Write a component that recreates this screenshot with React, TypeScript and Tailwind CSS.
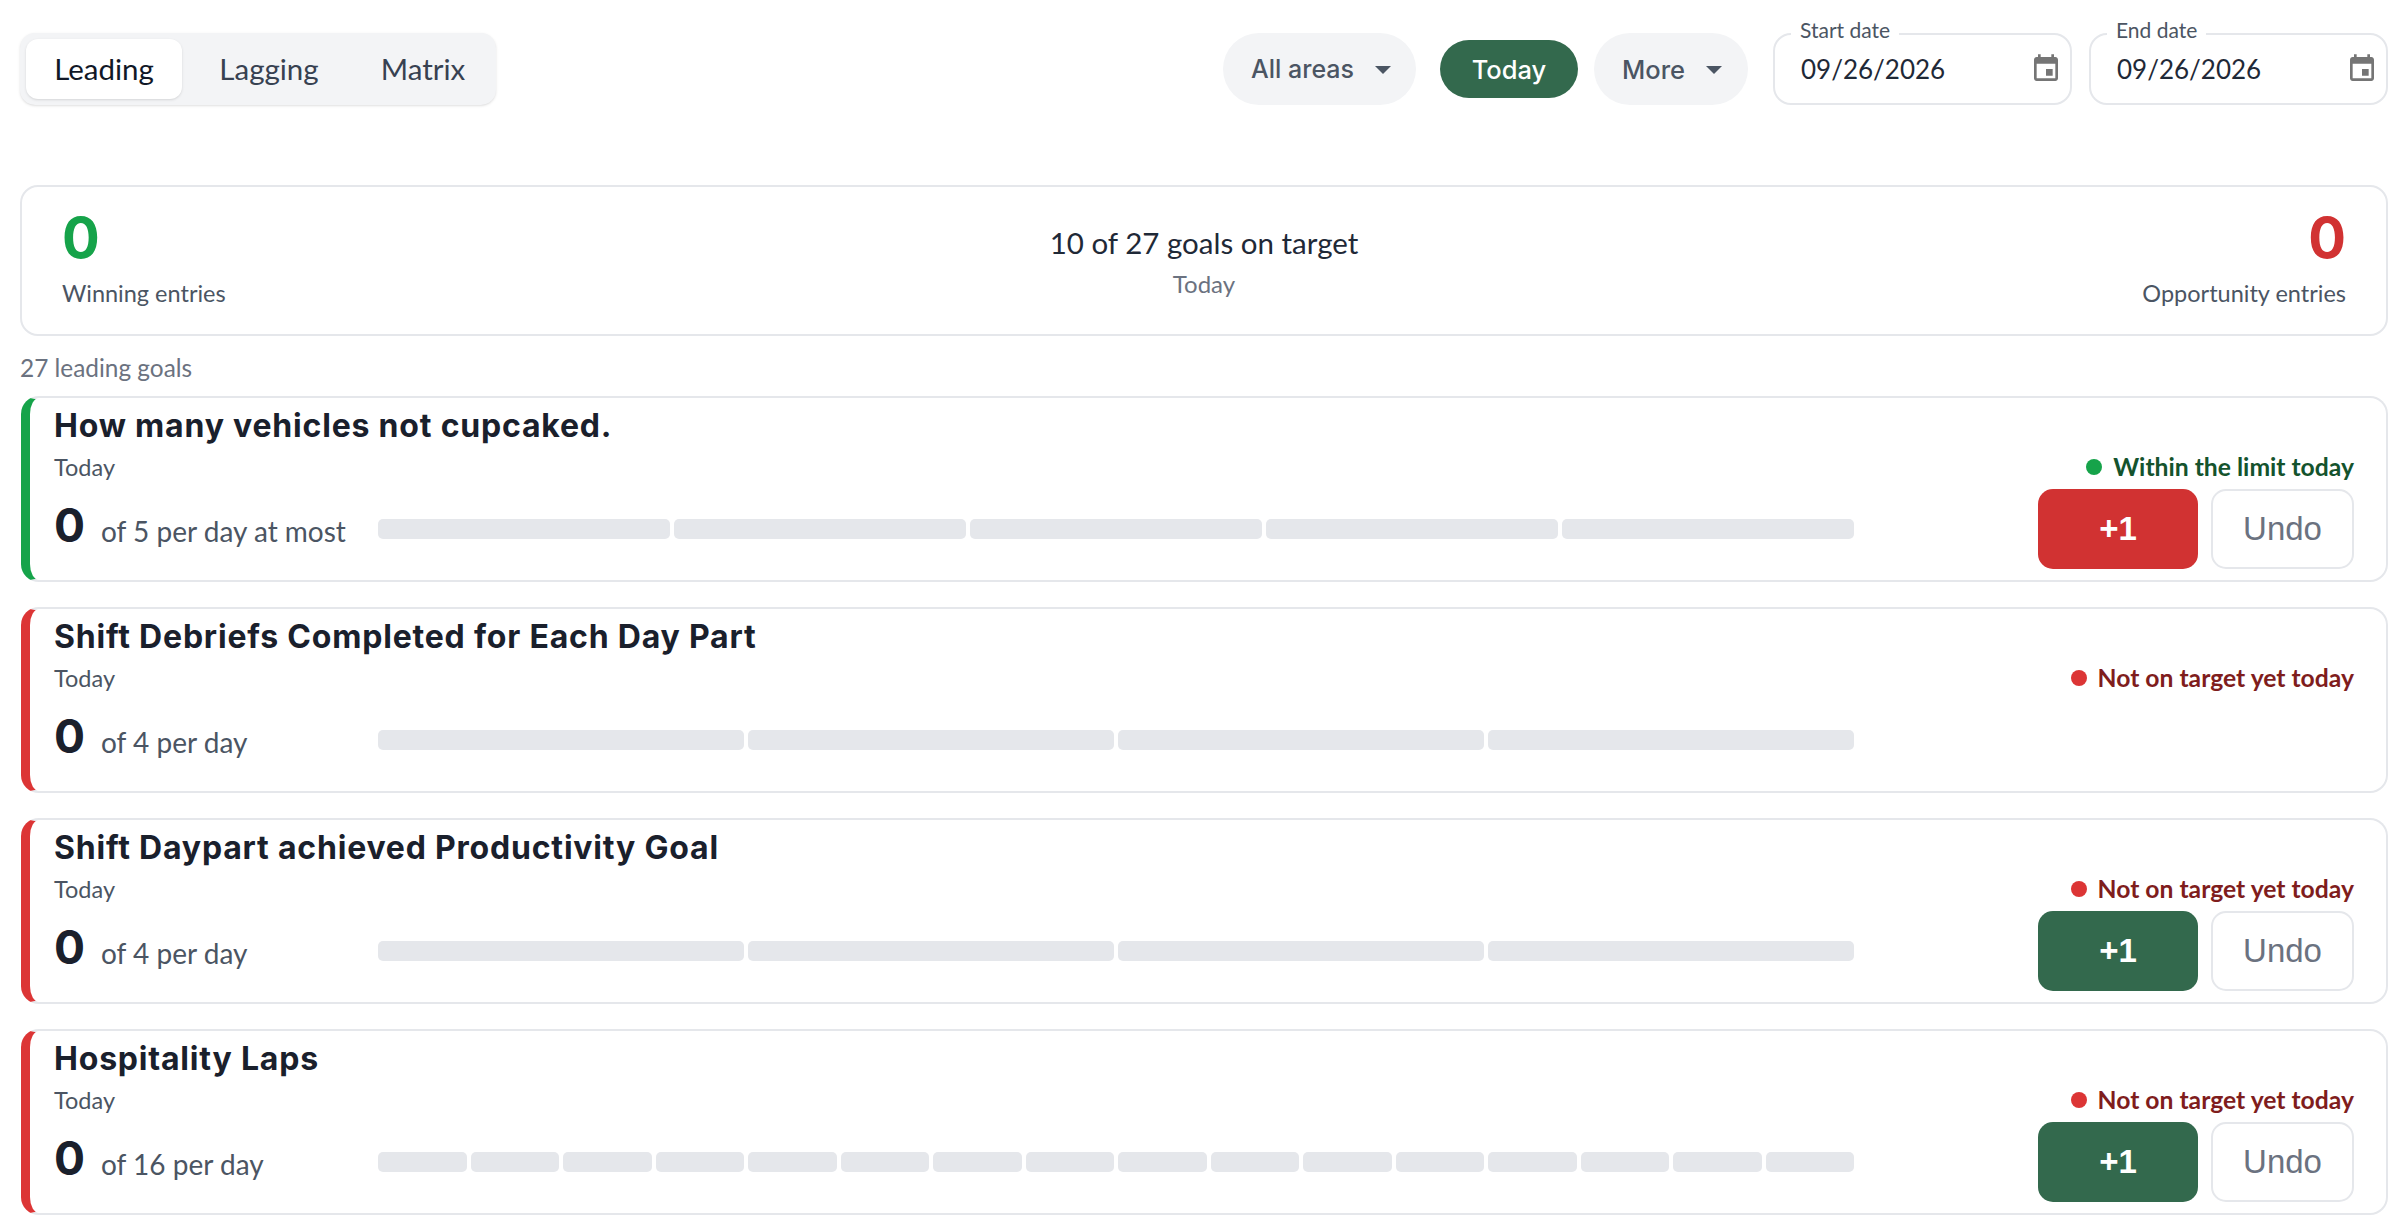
const bodyFont = "font-['Lato','Inter',sans-serif]"
const strongFont = "font-['Inter',sans-serif]"

const goals = [
  { title: "How many vehicles not cupcaked.", target: "of 5 per day at most", segments: 5, winning: true, actions: "red" },
  { title: "Shift Debriefs Completed for Each Day Part", target: "of 4 per day", segments: 4, winning: false, actions: "none" },
  { title: "Shift Daypart achieved Productivity Goal", target: "of 4 per day", segments: 4, winning: false, actions: "green" },
  { title: "Hospitality Laps", target: "of 16 per day", segments: 16, winning: false, actions: "green" },
]

const CalendarIcon = () => (
  <svg viewBox="0 0 24 24" className="h-[32px] w-[32px] fill-[#757575]">
    <path d="M17 12h-5v5h5v-5zM16 1v2H8V1H6v2H5c-1.11 0-1.99.9-1.99 2L3 19c0 1.1.89 2 2 2h14c1.1 0 2-.9 2-2V5c0-1.1-.9-2-2-2h-1V1h-2zm3 18H5V8h14v11z" />
  </svg>
)

const Caret = () => <span className="ml-[21px] h-0 w-0 border-x-[8px] border-t-[8px] border-x-transparent border-t-[#4b5563]" />

const DateField = ({ label }: { label: string }) => (
  <div className="relative flex h-[72px] w-[299px] items-center justify-between rounded-[18px] border-2 border-[#e5e7eb] pl-[26px] pr-[8px]">
    <span className="absolute left-[16px] top-[-18px] bg-white px-[9px] text-[21px] leading-[26px] text-[#4b5563]">{label}</span>
    <span className="text-[26px] text-[#1f2937]">09/26/2026</span>
    <CalendarIcon />
  </div>
)

const GoalCard = ({ goal }: { goal: (typeof goals)[number] }) => (
  <div className={`ml-[1px] flex h-[186px] rounded-[18px] border-2 border-l-[9px] border-y-[#e5e7eb] border-r-[#e5e7eb] pl-[24px] pr-[32px] ${goal.winning ? "border-l-[#16a34a]" : "border-l-[#dc3535]"}`}>
    <div className="w-[1800px] pt-[8px]">
      <div className={`${strongFont} text-[32px] font-bold leading-[40px] tracking-[0.8px] text-[#1a202c]`}>{goal.title}</div>
      <div className="mt-[6px] text-[23.5px] leading-[30px] text-[#4b5563]">Today</div>
      <div className="mt-[22px] flex h-[50px] items-center">
        <div className="mb-[6px] flex w-[324px] items-baseline gap-[16px]">
          <span className={`${strongFont} text-[46px] font-bold leading-[48px] text-[#1a202c]`}>0</span>
          <span className="text-[28px] text-[#4b5563]">{goal.target}</span>
        </div>
        <div className="flex flex-1 gap-[4px]">
          {Array.from({ length: goal.segments }).map((_, i) => (
            <div key={i} className="h-[20px] flex-1 rounded-[5px] bg-[#e5e7eb]" />
          ))}
        </div>
      </div>
    </div>
    <div className="ml-auto flex flex-col items-end pt-[54px]">
      <div className={`flex h-[30px] items-center gap-[11px] text-[24.7px] font-bold ${goal.winning ? "text-[#14532d]" : "text-[#7f1d1d]"}`}>
        <span className={`h-[16px] w-[16px] rounded-full ${goal.winning ? "bg-[#16a34a]" : "bg-[#dc3535]"}`} />
        {goal.winning ? "Within the limit today" : "Not on target yet today"}
      </div>
      {goal.actions !== "none" && (
        <div className="mt-[7px] flex gap-[13px] font-['Liberation_Sans',sans-serif] text-[33px]">
          <button className={`h-[80px] w-[160px] rounded-[15px] font-bold text-white ${goal.actions === "red" ? "bg-[#d13232]" : "bg-[#33694d]"}`}>+1</button>
          <button className="h-[80px] w-[143px] rounded-[15px] border-2 border-[#e5e7eb] bg-white text-[#6b7280]">Undo</button>
        </div>
      )}
    </div>
  </div>
)

export default function App() {
  return (
    <div className={`${bodyFont} min-h-screen bg-white pl-[20px] pr-[19px] pt-[33px]`}>
      {/* Top bar */}
      <div className="flex h-[72px] items-center justify-between">
        <div className="flex h-[72px] w-[476px] items-center rounded-[15px] bg-[#f3f4f6] px-[6px] text-[29.5px] shadow-sm">
          <div className="flex h-[60px] w-[156px] items-center justify-center rounded-[12px] bg-white text-[#111827] shadow-sm">Leading</div>
          <div className="w-[174px] text-center text-[#374151]">Lagging</div>
          <div className="w-[134px] text-center text-[#374151]">Matrix</div>
        </div>
        <div className={`${strongFont} flex items-center`}>
          <div className="flex h-[72px] w-[193px] items-center rounded-full bg-[#f3f4f6] pl-[28px] pt-[2px] text-[25px] font-medium text-[#4b5563]">All areas<Caret /></div>
          <div className="ml-[24px] flex h-[58px] w-[138px] items-center justify-center rounded-full bg-[#33694d] pt-[2px] text-[25.5px] font-medium text-white">Today</div>
          <div className="ml-[16px] flex h-[72px] w-[154px] items-center rounded-full bg-[#f3f4f6] pl-[28px] pt-[2px] text-[25.5px] font-medium text-[#4b5563]">More<Caret /></div>
          <div className={`${bodyFont} ml-[25px] flex gap-[17px]`}>
            <DateField label="Start date" />
            <DateField label="End date" />
          </div>
        </div>
      </div>

      {/* Summary */}
      <div className="mt-[80px] grid h-[151px] grid-cols-3 rounded-[18px] border-2 border-[#e5e7eb] px-[40px]">
        <div className="pt-[19px]">
          <div className={`${strongFont} text-[56px] font-bold leading-[64px] text-[#16a34a]`}>0</div>
          <div className="mt-[8px] text-[23.5px] leading-[30px] text-[#4b5563]">Winning entries</div>
        </div>
        <div className="pt-[38px] text-center">
          <div className="text-[29.5px] leading-[36px] text-[#1f2937]">10 of 27 goals on target</div>
          <div className="mt-[8px] text-[24px] leading-[30px] text-[#6b7280]">Today</div>
        </div>
        <div className="pt-[19px] text-right">
          <div className={`${strongFont} text-[56px] font-bold leading-[64px] text-[#d13232]`}>0</div>
          <div className="mt-[8px] text-[23.5px] leading-[30px] text-[#4b5563]">Opportunity entries</div>
        </div>
      </div>

      <div className="mt-[19px] text-[24.4px] leading-[26px] text-[#6b7280]">27 leading goals</div>

      {/* Goals */}
      <div className="mt-[15px] flex flex-col gap-[25px]">
        {goals.map((goal) => (
          <GoalCard key={goal.title} goal={goal} />
        ))}
      </div>
    </div>
  )
}
